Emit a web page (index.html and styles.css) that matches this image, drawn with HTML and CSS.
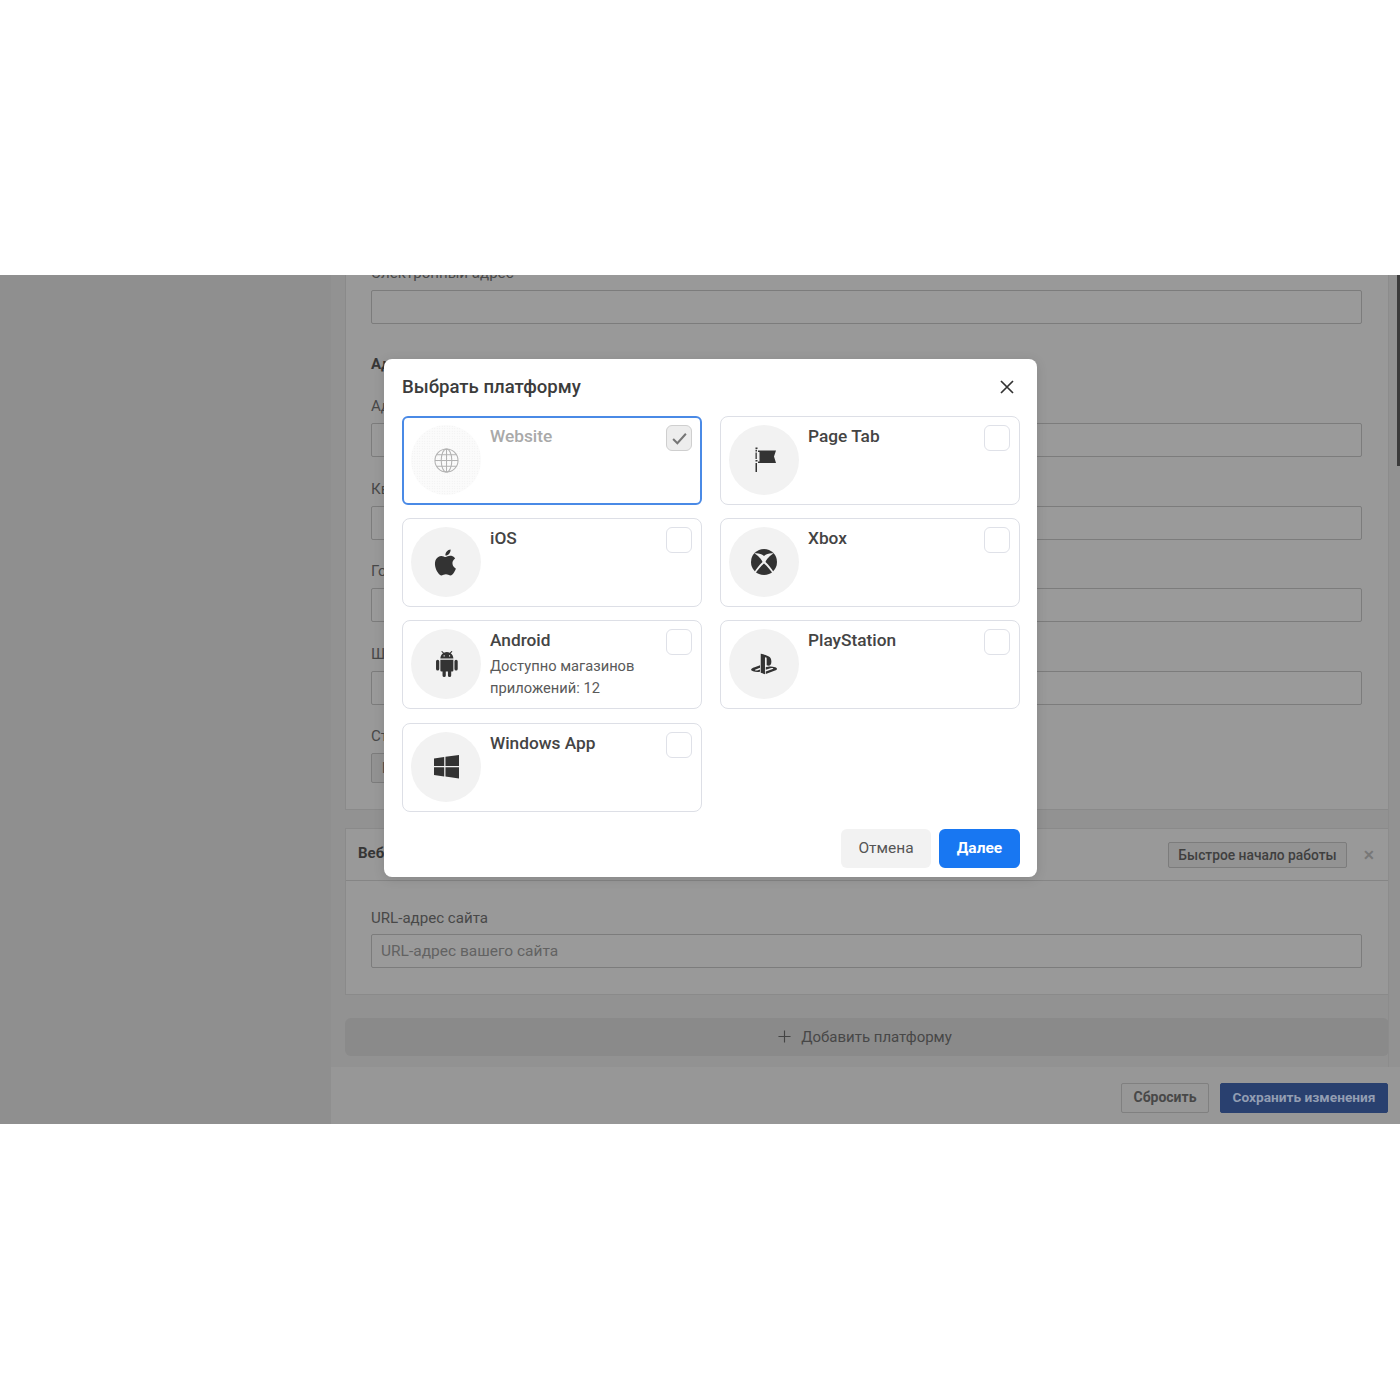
FILE: index.html
```html
<!DOCTYPE html>
<html lang="ru">
<head>
<meta charset="utf-8">
<title>Выбрать платформу</title>
<link rel="stylesheet" href="styles.css">
</head>
<body>
<div class="blank-top"></div>
<div class="stage">
  <aside class="sidebar"></aside>
  <main class="main">
    <div class="content">
      <section class="card card-first">
        <div class="field"><div class="label">Электронный адрес</div><div class="input"></div></div>
        <h3 class="section-title">Адрес</h3>
        <div class="field"><div class="label">Адрес</div><div class="input"></div></div>
        <div class="field"><div class="label">Квартира</div><div class="input"></div></div>
        <div class="field"><div class="label">Город</div><div class="input"></div></div>
        <div class="field"><div class="label">Штат</div><div class="input"></div></div>
        <div class="field field-last"><div class="label">Страна</div><div class="select">Выберите</div></div>
      </section>
      <section class="card card-web">
        <header class="card-head">
          <h3 class="card-title">Веб-сайт</h3>
          <div class="card-tools"><button class="quick">Быстрое начало работы</button><span class="dismiss">✕</span></div>
        </header>
        <div class="card-body">
          <div class="label label-url">URL-адрес сайта</div>
          <div class="input placeholder">URL-адрес вашего сайта</div>
        </div>
      </section>
      <div class="add-platform"><svg class="plus" viewBox="0 0 14 14"><path d="M7 0.5V13.5M0.5 7H13.5"/></svg><span>Добавить платформу</span></div>
    </div>
    <footer class="footer">
      <button class="btn-reset">Сбросить</button>
      <button class="btn-save">Сохранить изменения</button>
    </footer>
    <div class="scroll-track"></div>
    <div class="scrollbar"></div>
  </main>

  <div class="modal">
    <header class="modal-head">
      <h2 class="modal-title">Выбрать платформу</h2>
      <svg class="close" viewBox="0 0 14 14"><path d="M1 1L13 13M13 1L1 13"/></svg>
    </header>
    <div class="grid">
      <div class="tile tile-selected">
        <div class="circle circle-pale">
          <svg class="icon globe" viewBox="0 0 26 26"><circle cx="13" cy="13" r="12"/><ellipse cx="13" cy="13" rx="5.5" ry="12"/><path d="M13 1V25M1 13H25M2.8 7H23.2M2.8 19H23.2"/></svg>
        </div>
        <div class="tile-text"><div class="tile-name">Website</div></div>
        <div class="check check-on"><svg viewBox="0 0 16 16"><path d="M2 8.5L6 12.5L14 3.5"/></svg></div>
      </div>
      <div class="tile">
        <div class="circle">
          <svg class="icon" viewBox="0 0 26 26"><path d="M4.5 0.5H6.5V2H4.5ZM4.5 2.8H6V4.5H4.5ZM4.5 5.5H5.8V12H4.5ZM4.5 13H6.5V14.5H4.5ZM4.5 16H6V25H4.5ZM7 3.5H25L23 9.5L25 16H7V14.5H8.5V5H7Z"/></svg>
        </div>
        <div class="tile-text"><div class="tile-name">Page Tab</div></div>
        <div class="check"></div>
      </div>
      <div class="tile">
        <div class="circle">
          <svg class="icon icon-apple" viewBox="0.8 0 24 24"><path d="M18.71,19.5C17.88,20.74 17,21.95 15.66,21.97C14.32,22 13.89,21.18 12.37,21.18C10.84,21.18 10.37,21.95 9.1,22C7.79,22.05 6.8,20.68 5.96,19.47C4.25,17 2.94,12.45 4.7,9.39C5.57,7.87 7.13,6.91 8.82,6.88C10.1,6.86 11.32,7.75 12.11,7.75C12.89,7.75 14.37,6.68 15.92,6.84C16.57,6.87 18.39,7.1 19.56,8.82C19.47,8.88 17.39,10.1 17.41,12.63C17.44,15.65 20.06,16.66 20.09,16.67C20.06,16.74 19.67,18.11 18.71,19.5M13,3.5C13.73,2.67 14.94,2.04 15.94,2C16.07,3.17 15.6,4.35 14.9,5.19C14.21,6.04 13.07,6.7 11.95,6.61C11.8,5.46 12.36,4.26 13,3.5Z"/></svg>
        </div>
        <div class="tile-text"><div class="tile-name">iOS</div></div>
        <div class="check"></div>
      </div>
      <div class="tile">
        <div class="circle">
          <svg class="icon xbox" viewBox="0 0 26 26"><circle class="xbox-disc" cx="13" cy="13" r="13"/><path class="xbox-x" d="M3.5 4.5C7 4 10.5 5 13 7C15.5 5 19 4 22.5 4.5C19 6.5 15.5 10 14.5 13C18 16.5 21 20 22.5 23L21.5 24C19 20.5 16 17 13 14.5C10 17 7 20.5 4.5 24L3.5 23C5 20 8 16.5 11.5 13C10.5 10 7 6.5 3.5 4.5Z"/></svg>
        </div>
        <div class="tile-text"><div class="tile-name">Xbox</div></div>
        <div class="check"></div>
      </div>
      <div class="tile">
        <div class="circle">
          <svg class="icon" viewBox="-0.8 0 24 24"><path d="M15,5H14V4H15M10,5H9V4H10M15.53,2.16L16.84,0.85C17.03,0.66 17.03,0.34 16.84,0.14C16.64,-0.05 16.32,-0.05 16.13,0.14L14.65,1.62C13.85,1.23 12.95,1 12,1C11.04,1 10.14,1.23 9.34,1.63L7.85,0.14C7.66,-0.05 7.34,-0.05 7.15,0.14C6.95,0.34 6.95,0.66 7.15,0.85L8.46,2.16C6.97,3.26 6,5 6,7H18C18,5 17,3.25 15.53,2.16M20.5,8A1.5,1.5 0 0,0 19,9.5V16.5A1.5,1.5 0 0,0 20.5,18A1.5,1.5 0 0,0 22,16.5V9.5A1.5,1.5 0 0,0 20.5,8M3.5,8A1.5,1.5 0 0,0 2,9.5V16.5A1.5,1.5 0 0,0 3.5,18A1.5,1.5 0 0,0 5,16.5V9.5A1.5,1.5 0 0,0 3.5,8M6,18A1,1 0 0,0 7,19H8V22.5A1.5,1.5 0 0,0 9.5,24A1.5,1.5 0 0,0 11,22.5V19H13V22.5A1.5,1.5 0 0,0 14.5,24A1.5,1.5 0 0,0 16,22.5V19H17A1,1 0 0,0 18,18V8H6V18Z"/></svg>
        </div>
        <div class="tile-text"><div class="tile-name">Android</div><div class="tile-sub">Доступно магазинов приложений: 12</div></div>
        <div class="check"></div>
      </div>
      <div class="tile">
        <div class="circle">
          <svg class="icon" viewBox="0 0 24 24"><path d="M8.985 2.596v17.548l3.915 1.261V6.688c0-.69.304-1.151.794-.991.636.181.76.814.76 1.505v5.876c2.441 1.193 4.362-.002 4.362-3.153 0-3.237-1.126-4.675-4.438-5.827-1.307-.448-3.728-1.186-5.391-1.502zm4.656 16.242l6.296-2.275c.715-.258.826-.625.246-.818-.586-.192-1.637-.139-2.357.123l-4.205 1.499v-2.385l.24-.085s1.201-.42 2.913-.615c1.696-.18 3.785.03 5.437.661 1.848.601 2.04 1.472 1.576 2.072-.465.6-1.622 1.036-1.622 1.036l-8.544 3.107V18.84zM1.89 18.6c-1.9-.534-2.22-1.643-1.35-2.284.804-.6 2.17-1.05 2.17-1.05l5.64-2.01v2.283L4.29 17.06c-.705.271-.825.632-.23.825.586.195 1.637.15 2.343-.12L8.35 17.05v2.04c-.12.03-.256.045-.39.075-1.95.33-4.02.18-6.07-.555z"/></svg>
        </div>
        <div class="tile-text"><div class="tile-name">PlayStation</div></div>
        <div class="check"></div>
      </div>
      <div class="tile">
        <div class="circle">
          <svg class="icon icon-win" viewBox="0 0 24 24"><path d="M0 4.2L9.8 2.9V11.6H0ZM11 2.7L24 0.9V11.6H11ZM0 12.8H9.8V21.5L0 20.2ZM11 12.8H24V23.5L11 21.7Z"/></svg>
        </div>
        <div class="tile-text"><div class="tile-name">Windows App</div></div>
        <div class="check"></div>
      </div>
    </div>
    <footer class="modal-foot">
      <button class="btn-cancel">Отмена</button>
      <button class="btn-next">Далее</button>
    </footer>
  </div>
</div>
<div class="blank-bottom"></div>
</body>
</html>
```

FILE: styles.css
```css
* { box-sizing: border-box; }
html, body { margin: 0; padding: 0; background: #fff; }
body { font-family: Roboto, "Liberation Sans", sans-serif; color: #3a3a3a; }
h2, h3 { margin: 0; }
button { font-family: inherit; cursor: pointer; }

.blank-top { height: 275px; }
.blank-bottom { height: 276px; }

.stage { position: relative; height: 849px; display: flex; overflow: hidden; background: #979797; }
.sidebar { width: 331px; flex: none; background: #8f8f8f; }
.main { position: relative; flex: 1; min-width: 0; display: flex; flex-direction: column; background: #929292; }
.content { padding: 0 11px 0 14px; }

.card { background: #999; border: 1px solid #8a8a8a; }
.card-first { margin-top: -20px; padding: 7px 26px 26px 25px; }
.field { margin-bottom: 21.5px; }
.field-last { margin-bottom: 0; }
.label { font-size: 15.1px; line-height: 20px; height: 18px; margin-bottom: 9px; color: #484848; white-space: nowrap; }
.label-url { margin-bottom: 8px; }
.input { height: 34px; border: 1px solid #7c7c7c; border-radius: 2px; background: #9a9a9a; }
.select { width: 120px; height: 30px; padding: 0 10px; font-size: 14px; line-height: 28px; color: #484848; border: 1px solid #7c7c7c; border-radius: 2px; background: #929292; }
.placeholder { padding: 0 9px; font-size: 15.5px; line-height: 32px; color: #626262; }
.section-title { margin: 30px 0 24px; font-size: 15px; line-height: 20px; height: 18px; font-weight: 700; color: #363636; }

.card-web { margin-top: 18px; }
.card-head { height: 52px; display: flex; align-items: center; justify-content: space-between; padding: 0 12px; border-bottom: 1px solid #858585; }
.card-title { margin-bottom: 3px; font-size: 15px; line-height: 18px; font-weight: 700; color: #363636; }
.card-tools { display: flex; align-items: center; gap: 15px; }
.quick { width: 179px; height: 26px; padding: 0; font-size: 13.8px; font-weight: 500; color: #3f3f3f; background: #939393; border: 1px solid #7c7c7c; border-radius: 2px; }
.dismiss { width: 14px; font-size: 14px; font-weight: 700; color: #777; line-height: 14px; text-align: center; }
.card-body { padding: 27px 26px 26px 25px; }

.add-platform { margin-top: 23px; height: 38px; display: flex; align-items: center; justify-content: center; gap: 10px; background: #8a8a8a; border-radius: 6px; font-size: 15px; color: #474747; padding: 0 4px 1px 0; }
.plus { width: 13px; height: 13px; fill: none; stroke: #444; stroke-width: 1.2; }

.footer { margin-top: 11px; height: 57px; display: flex; justify-content: flex-end; align-items: flex-start; gap: 11px; padding: 16px 12px 0 0; background: #979797; }
.btn-reset { width: 88px; height: 30px; padding: 0 0 2px; font-size: 14px; font-weight: 700; color: #484848; background: #979797; border: 1px solid #808080; border-radius: 2px; }
.btn-save { width: 168px; height: 30px; padding: 0 0 2px; font-size: 13.7px; font-weight: 700; color: #929db2; background: #29406f; border: 1px solid #29406f; border-radius: 2px; }
.scroll-track { position: absolute; right: 0; top: 0; width: 12px; height: 792px; border-left: 1px solid #8c8c8c; }
.scrollbar { position: absolute; right: 0; top: 0; width: 3px; height: 191px; background: #3b3b3b; }

.modal { position: absolute; left: 384px; top: 84px; width: 653px; height: 518px; display: flex; flex-direction: column; padding: 0 17px 9px 18px; background: #fff; border-radius: 8px; box-shadow: 0 2px 12px rgba(0, 0, 0, .12); }
.modal-head { height: 57px; flex: none; display: flex; align-items: center; justify-content: space-between; padding: 0 6px 1px 0; }
.modal-title { font-size: 18.6px; line-height: 24px; font-weight: 500; color: #3c3c3c; }
.close { width: 14px; height: 14px; fill: none; stroke: #333; stroke-width: 1.7; }

.grid { display: grid; grid-template-columns: 300px 300px; grid-auto-rows: 89px; column-gap: 18px; row-gap: 13.2px; }
.tile { display: flex; align-items: flex-start; padding: 8px 9px 8px 8px; background: #fff; border: 1px solid #dddfe6; border-radius: 8px; }
.tile-selected { padding: 7px 8px 7px 7px; border: 2px solid #4a8ae6; border-radius: 6px; }
.circle { width: 70px; height: 70px; flex: none; display: flex; align-items: center; justify-content: center; background: #f2f2f2; border-radius: 50%; }
.circle-pale { background: #fbfbfb radial-gradient(circle, #ececec 0.7px, transparent 0.8px) 0 0 / 2.5px 2.5px; }
.icon { width: 26px; height: 26px; fill: #333; }
.icon-apple { width: 31px; height: 31px; flex: none; }
.icon-win { width: 25px; height: 25px; }
.globe { width: 25px; height: 25px; fill: none; stroke: #b2b2b2; stroke-width: 1.1; }
.xbox-disc { fill: #333; }
.xbox-x { fill: #f2f2f2; }
.tile-text { flex: 1; min-width: 0; padding: 1px 0 0 9px; }
.tile-name { font-size: 17.3px; line-height: 20px; font-weight: 500; color: #444; }
.tile-selected .tile-name { color: #a9a9a9; }
.tile-sub { width: 172px; margin-top: 5px; font-size: 14.7px; line-height: 22px; color: #5a5a5a; }
.check { width: 26px; height: 26px; flex: none; display: flex; align-items: center; justify-content: center; border: 1px solid #dfe1e8; border-radius: 6px; background: #fff; }
.check-on { background: #ededed; border-color: #cfcfcf; }
.check svg { width: 17px; height: 17px; fill: none; stroke: #767676; stroke-width: 1.9; }

.modal-foot { margin-top: auto; display: flex; justify-content: flex-end; gap: 8px; }
.btn-cancel { width: 90px; height: 39px; padding: 0 0 2px; font-size: 15.5px; color: #555; background: #f2f2f2; border: 0; border-radius: 6px; }
.btn-next { width: 81px; height: 39px; padding: 0 0 2px; font-size: 15.5px; font-weight: 700; color: #fff; background: #1877f2; border: 0; border-radius: 6px; }
```
